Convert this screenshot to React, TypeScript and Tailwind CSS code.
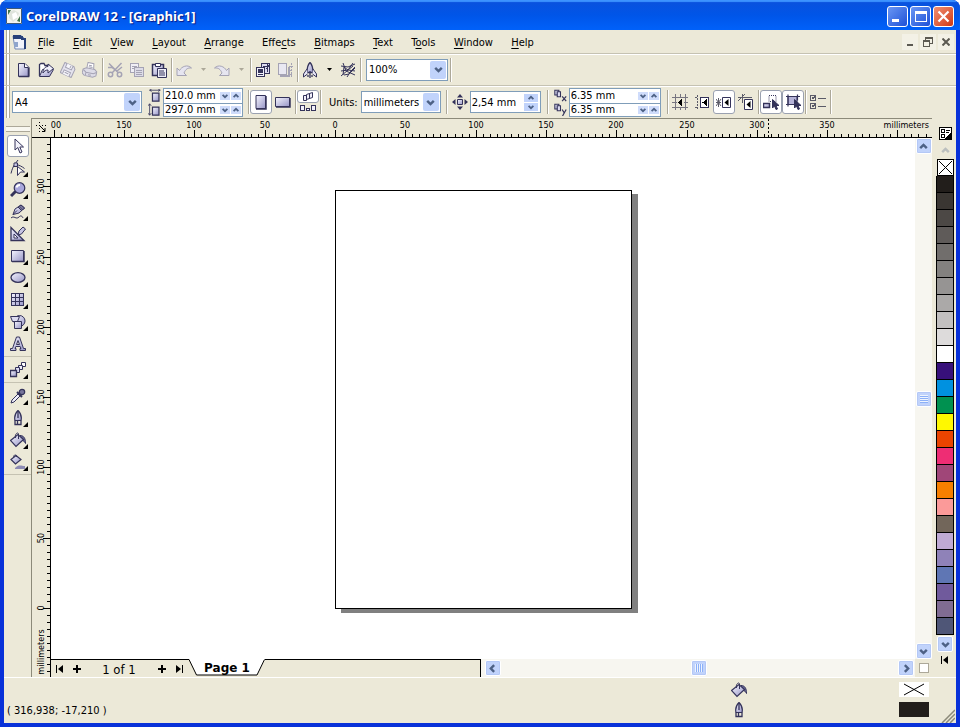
import React from "react";

type Kids = { children?: React.ReactNode };

const INK = "#34335a";
const SOFT = "url(#tint)";
const DIM = "#a5a3b4";
const GREY = "#5b5b68";

function Ico({ children, size = 16, crisp = false }: Kids & { size?: number; crisp?: boolean }) {
  return (
    <svg
      width={size}
      height={size}
      viewBox="0 0 16 16"
      fill="none"
      stroke={INK}
      strokeWidth="1"
      shapeRendering={crisp ? "crispEdges" : "auto"}
      className="shrink-0"
      aria-hidden="true"
    >
      {children}
    </svg>
  );
}

/* ---------- standard toolbar icons ---------- */
const NewIcon = () => (
  <Ico>
    <path d="M2.5 1.5h6.500l4 4v9H2.500z" fill={SOFT} />
    <path d="M8.500 1.500v4h4" fill="#fff" />
    <path d="M3 14.500h9.500V6" strokeWidth="1.600" />
  </Ico>
);
const OpenIcon = () => (
  <Ico>
    <path d="M1.500 14V2.500l1.500-1h3l1 2h4v2" fill="#fff" strokeWidth="1.300" />
    <path d="M1.500 14.500l3-7h11l-4 7z" fill={SOFT} />
    <path d="M5 11c0-4 2-6.500 5-6.500V2L15.500 6.500 10 11V8c-2 0-4 1-5 3z" fill="#f1f0fb" />
  </Ico>
);
const SaveIcon = () => (
  <Ico>
    <g stroke={DIM} transform="rotate(25 8 8)">
      <path d="M2 2.500h10l2 2v9H2z" fill="#e4e3ee" />
      <path d="M4.500 2.500v4h6.500v-4M4.500 13.500v-4h7v4M9 3v2.500M6 11.500h4" fill="#f6f6fb" />
    </g>
  </Ico>
);
const PrintIcon = () => (
  <Ico>
    <g stroke={DIM} transform="rotate(12 8 8)">
      <path d="M4.500 7l0-6h6l1 6" fill="#fff" />
      <path d="M1 8.500l3-2h8.500l2.500 2v4l-3 2H3.500l-2.500-2z" fill="#dddce8" />
      <path d="M1.500 9l3 2h7.500l3-2M4.500 11v3M6 3.500h3M6 5h4M7 13h3" />
    </g>
  </Ico>
);
const CutIcon = () => (
  <Ico>
    <g stroke={DIM} strokeWidth="1.500">
      <path d="M2 1.500l9.500 9.500M14.500 1L5 11M1 5.500h4l4 3M15 5l-5 4" />
      <circle cx="3.500" cy="12.500" r="2.200" />
      <circle cx="12.500" cy="12.500" r="2.200" />
    </g>
  </Ico>
);
const CopyIcon = () => (
  <Ico crisp>
    <g stroke={DIM}>
      <path d="M1.500 1.500h8v9h-8z" fill="#f0eff6" />
      <path d="M5.500 5.500h9v9h-9z" fill="#dddce8" />
      <path d="M3 4h5M3 6h2M7 8h6M7 10h6M7 12h6" />
    </g>
  </Ico>
);
const PasteIcon = () => (
  <Ico>
    <path d="M1.500 2.500h11v11h-11z" fill={SOFT} strokeWidth="1.500" />
    <path d="M4.500 1.500h5v3h-5z" fill="#fff" />
    <path d="M6.500 6.500h9v9h-9z" fill="#eeeefa" />
    <path d="M8 9h5M8 11h6M8 13h6" />
  </Ico>
);
const UndoIcon = ({ flip = false }: { flip?: boolean }) => (
  <Ico>
    <path
      d="M1 13.500V6l2.500 2.500c2-4 8-6.500 12-2.500-4-.5-6 1.500-7.500 5l2.500 2.500z"
      fill="#e6e5f0"
      stroke={DIM}
      transform={flip ? "matrix(-1 0 0 1 16 0)" : undefined}
    />
  </Ico>
);
const ImportIcon = () => (
  <Ico crisp>
    <path d="M6.500 1.500h8v10h-8z" fill="#dcdbf0" strokeWidth="1.500" />
    <path d="M8 4h4M12 2.500v3L14 4zM12.500 6v4" />
    <path d="M1.500 5.500h8v9h-8z" fill="#f1f0fb" strokeWidth="1.500" />
    <path d="M3.500 7v3h4V7zM3 12.500h5" fill={INK} />
  </Ico>
);
const ExportIcon = () => (
  <Ico crisp>
    <path d="M1.500 1.500h8v11h-8z" fill="#e9e8f2" stroke={DIM} />
    <path d="M3 14h9V5" stroke={DIM} strokeWidth="2" />
    <path d="M14.500 1v14M12 4h4M13 8h3M13 12h3" stroke={DIM} strokeDasharray="2 1" />
  </Ico>
);
const RocketIcon = () => (
  <Ico>
    <path d="M8 .5c2.500 2.500 3 6 3 10H5c0-4 .5-7.500 3-10z" fill={SOFT} strokeWidth="1.300" />
    <path d="M5 7l-3.500 5v3l4-3M11 7l3.500 5v3l-4-3" fill="#e6e5f6" />
    <path d="M6 13v2M8 9v7M10 13v2" strokeWidth="1.300" />
  </Ico>
);
const WebIcon = () => (
  <Ico>
    <path d="M1 4l7 1 7-3M3 1l3 8 9 4M1 9l7-1 7 1M1 14l7-6 5-7M7 15l4-6 4-4M4 5l4 3 5-4M4 13l5-1 6-6M4 5L3 13" />
  </Ico>
);

/* ---------- property bar icons ---------- */
const PaperIcon = ({ tall = false }: { tall?: boolean }) => (
  <Ico size={13}>
    <path d="M5.500 5h8v10h-8z" fill={SOFT} strokeWidth="1.500" />
    {tall ? (
      <path d="M2 1v14M0 3.500L2 1l2 2.500M0 12.500L2 15l2-2.500" />
    ) : (
      <path d="M2 1.500h13M4.500 0L2 1.500 4.500 3M12.500 0L15 1.500 12.500 3" />
    )}
  </Ico>
);
const Portrait = () => (
  <Ico>
    <path d="M3 1.500h9.500v13H3z" fill={SOFT} />
    <path d="M3 15h10V2" strokeWidth="1.500" />
  </Ico>
);
const Landscape = () => (
  <Ico>
    <path d="M.5 3.500h14v9H.5z" fill={SOFT} />
    <path d="M1 13h14V4" strokeWidth="1.500" />
  </Ico>
);
const PagesTop = () => (
  <svg width="12" height="9" viewBox="0 0 12 9" fill="#f1f0fb" stroke={INK} aria-hidden="true">
    <path d="M1.500 3.500h3v5h-3zM4.500 2.500l3-1v5l-3 1zM7.500 1.500l3-1v5l-3 1z" />
  </svg>
);
const PagesLow = () => (
  <svg width="16" height="7" viewBox="0 0 16 7" fill="#f1f0fb" stroke={INK} shapeRendering="crispEdges" aria-hidden="true">
    <path d="M.5.5h4v5h-4zM6.500 3.500h3v2h-3zM11.500.5h4v5h-4z" />
  </svg>
);
const NudgeIcon = () => (
  <Ico>
    <path d="M5.500 5.500h5v5h-5z" fill={SOFT} />
    <path d="M8 0l3 3.500H5zM8 16l3-3.500H5zM0 8l3.500-3v6zM16 8l-3.500-3v6z" fill={INK} stroke="none" />
  </Ico>
);
const DupIcon = ({ axis }: { axis: string }) => (
  <Ico size={13}>
    <path d="M1 1.500h5v6H1z" fill={SOFT} strokeWidth="1.300" />
    <path d="M4 3.500h4v6H4z" fill="#dcdbf0" strokeWidth="1.300" />
    <path d={axis === "x" ? "M10 9l5 6M15 9l-5 6" : "M10 8l2.500 4M15 8l-4.500 8"} strokeWidth="1.500" />
  </Ico>
);
const SnapGrid = () => (
  <Ico crisp>
    <path d="M3.500 0v16M8.500 0v4M8.500 13v3M13.500 0v16M0 3.500h16M0 8.500h5M12 8.500h4M0 13.500h16" stroke="#77757f" />
    <path d="M10 5v7L6 8.500z" fill="#000" stroke="none" />
  </Ico>
);
const SnapBox = () => (
  <>
    <path d="M6.500 3.500h8v10h-8z" fill="#fff" />
    <path d="M12.500 5v7L8.500 8.500z" fill="#000" stroke="none" />
  </>
);
const SnapGuides = () => (
  <Ico crisp>
    <path d="M3.500 1v15M1 3.500h3M1 13.500h3" strokeDasharray="2 1" stroke={GREY} />
    <SnapBox />
  </Ico>
);
const SnapObjects = () => (
  <Ico>
    <path d="M0 5l5 7M5 5l-5 7M2.500 4v9M0 8.500h5" stroke={GREY} />
    <SnapBox />
  </Ico>
);
const DynGuides = () => (
  <Ico>
    <path d="M4.500 0v9M0 3.500h14M0 7l7-7" stroke={GREY} />
    <path d="M6.500 5.500h8v10h-8z" fill="#fff" />
    <path d="M12.500 7v7L8.500 10.500z" fill="#000" stroke="none" />
  </Ico>
);
const CursorGlyph = () => <path d="M9.500 5.500v8.500l2-2 1.500 3.500 1.500-.5-1.500-3.500H16z" fill={INK} />;
const DrawComplex = () => (
  <Ico>
    <path d="M6 1.500h7v6H6z" strokeDasharray="1 1" />
    <path d="M.5 9.500h6v4h-6z" fill={SOFT} strokeWidth="1.500" />
    <CursorGlyph />
  </Ico>
);
const TreatFilled = () => (
  <Ico>
    <path d="M3 2.500h9v8H3z" fill="#b5b3d8" />
    <path d="M1 2.500h14M1 10.500h9M3 .5v12M12.500.5v6" strokeWidth="1.200" />
    <CursorGlyph />
  </Ico>
);
const OptionsIcon = () => (
  <Ico crisp>
    <path d="M.5 1.500h5v5h-5zM.5 9.500h5v5h-5zM8 4.500h8M8 12.500h8" stroke={GREY} />
    <path d="M2 3l1 2 3-4M2 11l1 2 3-4" stroke={GREY} />
  </Ico>
);

/* ---------- toolbox icons ---------- */
const PickTool = () => (
  <Ico>
    <path d="M5 1v11l2.800-2.500L10 15l2-1-2.200-5h3.700z" fill="#f2f2fb" />
  </Ico>
);
const ShapeTool = () => (
  <Ico>
    <path d="M8 0L5 4C3 6.500 2 9.500 1 13.500M6 4.500c3 .5 6 2 8.500 4" />
    <path d="M4 3h3.500v3.500H4z" fill={SOFT} />
    <path d="M7.500 6.500v9l3-3.500h4z" fill="#fff" />
  </Ico>
);
const ZoomTool = () => (
  <Ico>
    <path d="M5.500 9.500L1 14" strokeWidth="3" />
    <circle cx="9.500" cy="6" r="5.300" fill="#a9a7dc" strokeWidth="1.200" />
    <path d="M6.500 5.500c.5-2 2-2.500 3.500-2.500" stroke="#fff" strokeWidth="2" />
  </Ico>
);
const FreehandTool = () => (
  <Ico>
    <path d="M3 10.500L5 5l6-4 3.500 3-5.500 5z" fill={SOFT} />
    <path d="M3 10.500l4-4M8 3l4 4M1 14c3-3 5 2 8-1 2-2 3-1 4 1" />
    <path d="M9 2.500L12.500 6l2-2L11 1z" fill="#77759c" />
  </Ico>
);
const SmartTool = () => (
  <Ico>
    <path d="M1 1.500v13h13z" fill={SOFT} strokeWidth="1.300" />
    <path d="M4 8v4h4z" fill="#fff" />
    <path d="M8 9l1-4 4-4 2.500 2-4 5z" fill="#c6c4e2" />
  </Ico>
);
const RectTool = () => (
  <Ico>
    <path d="M1.500 2.500h12v11h-12z" fill={SOFT} />
    <path d="M2 13.500h12V3" strokeWidth="1.500" />
  </Ico>
);
const EllipseTool = () => (
  <Ico>
    <ellipse cx="8" cy="7.500" rx="7" ry="4.800" fill={SOFT} strokeWidth="1.300" />
  </Ico>
);
const GridTool = () => (
  <Ico crisp>
    <path d="M1.500 1.500h12v12h-12z" fill={SOFT} />
    <path d="M5.500 1v13M9.500 1v13M1 5.500h13M1 9.500h13" />
  </Ico>
);
const BasicShapes = () => (
  <Ico>
    <circle cx="9.500" cy="7" r="5.500" fill={SOFT} />
    <path d="M.5 2.500h9l-2 5h-5z" fill="#dcdbf0" />
    <path d="M4.500 7.500h7v7h-7z" fill={SOFT} />
  </Ico>
);
const TextTool = () => (
  <Ico>
    <path
      d="M6.500 1h3l4 11.500h2v2h-5.500v-2h1l-.8-2H5.800l-.8 2h1v2H.5v-2h2zM8 4.500L6.500 8.500h3z"
      fill={SOFT}
      fillRule="evenodd"
    />
  </Ico>
);
const BlendTool = () => (
  <Ico>
    <path d="M11.500.5h4v4h-4z" fill="#fff" />
    <path d="M8.500 3.500h4v4h-4z" fill="#eeeefa" />
    <path d="M5.500 5.500h4v5h-4z" fill="#dcdbf0" />
    <path d="M.5 8.500h6v6h-6z" fill={SOFT} strokeWidth="1.300" />
  </Ico>
);
const Eyedropper = () => (
  <Ico>
    <path d="M1 15l1-3 6-6 2 2-6 6z" fill="#eeeefa" />
    <path d="M7 4l5 5" strokeWidth="2" />
    <circle cx="12" cy="4" r="2.700" fill="#77759c" strokeWidth="1.200" />
  </Ico>
);
const PenTool = () => (
  <Ico>
    <path d="M8 .5c-3 3-4 6-3 10h6c1-4 0-7-3-10z" fill={SOFT} strokeWidth="1.200" />
    <path d="M8 1v7M5 10.500v4h6v-4M7.500 11v4" strokeWidth="1.300" />
  </Ico>
);
const FillTool = () => (
  <Ico>
    <path d="M10 3.500c4 0 5.500 3 5.500 8-1-2-2-3-4-3.500" fill="#6c6a98" />
    <path d="M.5 8.500L8 2.500l5.500 5L6 14.500z" fill={SOFT} strokeWidth="1.200" />
    <path d="M5.500 6c-1-4 2.500-6.500 3-4v5" />
  </Ico>
);
const InteractiveFill = () => (
  <Ico>
    <path d="M1 5.500L6 1.500l5 4L5.500 10z" fill={SOFT} strokeWidth="1.200" />
    <path d="M3.500 4c0-4 3-4 3-1" />
    <path d="M5 14c4-4 6-2 10-2v3H5z" fill="#8d8bb4" stroke="none" />
  </Ico>
);

/* ---------- shared pieces ---------- */
const Sep = () => <span className="mx-px h-6 w-px shrink-0 bg-[#aca899] shadow-[1px_0_0_#fff]" />;
const Grip = () => (
  <span className="mx-[2px] w-[4px] shrink-0 self-stretch border-x border-[#aca899] bg-white" />
);

function Chevron({ dir = "down", small = false }: { dir?: "down" | "up" | "left" | "right"; small?: boolean }) {
  const d = {
    down: "M2 3.500l3 3 3-3",
    up: "M2 6.500l3-3 3 3",
    left: "M6.500 2l-3 3 3 3",
    right: "M3.500 2l3 3-3 3",
  }[dir];
  return (
    <svg width={small ? 8 : 11} height={small ? 8 : 11} viewBox="0 0 10 10" fill="none" stroke="#4d6185" strokeWidth="2.200" aria-hidden="true">
      <path d={d} />
    </svg>
  );
}

function Combo({ id, label, value, options, className }: { id: string; label?: string; value: string; options: string[]; className: string }) {
  return (
    <span className={`flex shrink-0 items-center border border-[#7f9db9] bg-white p-px ${className}`}>
      <select id={id} aria-label={label} defaultValue={value} className="h-full min-w-0 flex-1 appearance-none bg-white pl-px outline-none">
        {options.map((o) => (
          <option key={o}>{o}</option>
        ))}
      </select>
      <span className="flex h-full w-4 items-center justify-center rounded-xs bg-[#c1d3fb]">
        <Chevron />
      </span>
    </span>
  );
}

function TinySpin({ name }: { name: string }) {
  return (
    <span className="flex gap-px pr-px">
      <button aria-label={`${name} down`} className="flex h-2 w-[10px] items-center justify-center bg-[#cfdcfb]">
        <Chevron small />
      </button>
      <button aria-label={`${name} up`} className="flex h-2 w-[10px] items-center justify-center bg-[#cfdcfb]">
        <Chevron dir="up" small />
      </button>
    </span>
  );
}

function PairFields({ rows, className }: { rows: { name: string; value: string }[]; className: string }) {
  return (
    <span className={`flex shrink-0 flex-col border border-[#7f9db9] bg-white ${className}`}>
      {rows.map((r, i) => (
        <span key={r.name} className={`flex items-center ${i ? "h-[13px] border-t border-[#7f9db9]" : "h-[14px] pt-px"}`}>
          <input aria-label={r.name} defaultValue={r.value} className="h-3 min-w-0 flex-1 bg-transparent pl-px leading-3 outline-none" />
          <TinySpin name={r.name} />
        </span>
      ))}
    </span>
  );
}

function Tool({ name, children, on = false }: Kids & { name: string; on?: boolean }) {
  return (
    <button
      aria-label={name}
      title={name}
      aria-pressed={on}
      className={`flex h-6 w-[22px] shrink-0 items-center justify-center ${on ? "rounded-[3px] border border-[#9aa1b0] bg-white" : ""}`}
    >
      {children}
    </button>
  );
}

const Caret = ({ dim = false, name }: { dim?: boolean; name: string }) => (
  <button aria-label={name} className="flex h-6 w-4 shrink-0 items-center justify-center">
    <svg width="5" height="3" viewBox="0 0 5 3" aria-hidden="true">
      <path d="M0 0h5L2.500 3z" fill={dim ? "#aca899" : "#000"} />
    </svg>
  </button>
);

const menus: [string, string, string][] = [
  ["", "F", "ile"],
  ["", "E", "dit"],
  ["", "V", "iew"],
  ["", "L", "ayout"],
  ["", "A", "rrange"],
  ["Effe", "c", "ts"],
  ["", "B", "itmaps"],
  ["", "T", "ext"],
  ["T", "o", "ols"],
  ["", "W", "indow"],
  ["", "H", "elp"],
];

const tools: { name: string; icon: React.ReactNode; fly?: boolean; gap?: boolean; on?: boolean }[] = [
  { name: "Pick", icon: <PickTool />, on: true },
  { name: "Shape", icon: <ShapeTool />, fly: true },
  { name: "Zoom", icon: <ZoomTool />, fly: true },
  { name: "Freehand", icon: <FreehandTool />, fly: true },
  { name: "Smart drawing", icon: <SmartTool /> },
  { name: "Rectangle", icon: <RectTool />, fly: true },
  { name: "Ellipse", icon: <EllipseTool />, fly: true },
  { name: "Graph paper", icon: <GridTool />, fly: true },
  { name: "Basic shapes", icon: <BasicShapes />, fly: true },
  { name: "Text", icon: <TextTool /> },
  { name: "Interactive blend", icon: <BlendTool />, fly: true, gap: true },
  { name: "Eyedropper", icon: <Eyedropper />, fly: true, gap: true },
  { name: "Outline", icon: <PenTool />, fly: true },
  { name: "Fill", icon: <FillTool />, fly: true },
  { name: "Interactive fill", icon: <InteractiveFill />, fly: true },
];

const swatches = [
  "#221e1b", "#3a3632", "#4c4845", "#5f5b59", "#716e6c", "#83817f", "#969493", "#aba9a8", "#c2c0c0", "#dddbdb", "#ffffff",
  "#37107a", "#0091e0", "#009150", "#fff800", "#ea4400", "#ee2d74", "#a04678", "#f77f00", "#fb9a99", "#72665a",
  "#bfaad4", "#8f82b8", "#5f76b4", "#705a9c", "#806c92", "#4f5677",
];

const MM = 1.406;
const steps = Array.from({ length: 150 }, (_, i) => i - 40);

function TopRuler() {
  const zero = 284;
  return (
    <svg className="h-[18px] min-w-0 flex-1 bg-[#ece9d8] font-['DejaVu_Sans_Condensed','Noto_Sans',sans-serif] text-[9px]" aria-label="Horizontal ruler">
      {steps.map((s) => {
        const x = Math.round(zero + s * 5 * MM);
        const major = s % 10 === 0;
        const label = s === -40 ? "00" : String(Math.abs(s * 5));
        return (
          <g key={s}>
            <rect x={x} y={major ? 11 : 15} width="1" height={major ? 7 : 3} />
            {major && s <= 70 && (
              <text x={s === -40 ? x + 2 : x} y="9" textAnchor="middle">
                {label}
              </text>
            )}
          </g>
        );
      })}
      <path d="M717.500 0v18" stroke="#000" strokeDasharray="2 2" />
      <text x="100%" dx="-3" y="9" textAnchor="end">
        millimeters
      </text>
    </svg>
  );
}

function SideRuler() {
  const zero = 470;
  return (
    <svg className="h-full w-[18px] shrink-0 bg-[#ece9d8] font-['DejaVu_Sans_Condensed','Noto_Sans',sans-serif] text-[9px]" aria-label="Vertical ruler">
      {steps.map((s) => {
        const y = Math.round(zero - s * 5 * MM);
        const major = s % 10 === 0;
        return (
          <g key={s}>
            <rect x={major ? 11 : 15} y={y} width={major ? 7 : 3} height="1" />
            {major && s >= 0 && s <= 60 && (
              <text transform={`translate(12 ${y}) rotate(-90)`} textAnchor="middle">
                {s * 5}
              </text>
            )}
          </g>
        );
      })}
      <text transform={`translate(12 ${zero + 44}) rotate(-90)`} textAnchor="middle">
        millimeters
      </text>
    </svg>
  );
}

const scrollBtn =
  "flex size-4 shrink-0 items-center justify-center rounded-[2px] border border-white bg-[#c1d3fb] shadow-[0_0_0_1px_#b4c8f6_inset]";

function Nav({ name, d }: { name: string; d: string }) {
  return (
    <button aria-label={name} className="flex h-4 w-[17px] shrink-0 items-center justify-center">
      <svg width="10" height="10" viewBox="0 0 10 10" aria-hidden="true">
        <path d={d} />
      </svg>
    </button>
  );
}

const FIRST = "M1 1h1v8H1zM8 1v8L3 5z";
const LAST = "M8 1h1v8H8zM2 1v8l5-4z";
const PLUS = "M4 1h2v3h3v2H6v3H4V6H1V4h3z";

const winBtn = "flex size-[21px] items-center justify-center rounded-[3px] border border-white";

export default function App() {
  return (
    <div className="flex h-screen w-full flex-col overflow-hidden rounded-t-lg bg-[#0831d9] font-['DejaVu_Sans_Condensed','Noto_Sans',sans-serif] text-[11px] leading-none text-black">
      <header className="flex h-[30px] shrink-0 items-center bg-linear-to-b from-[#0a51dc] via-[#0055e8] to-[#0061fa] px-[6px] pt-[2px] shadow-[inset_0_2px_1px_#3c93ff]">
        <svg width="16" height="16" viewBox="0 0 16 16" aria-hidden="true">
          <defs>
            <linearGradient id="tint" x1="0" y1="0" x2="1" y2="1">
              <stop offset="0" stopColor="#f6f6ff" />
              <stop offset="1" stopColor="#9694c6" />
            </linearGradient>
          </defs>
          <path d="M0 0h16v16H0z" fill="#f4f5f0" />
          <path d="M.5.5h15v15H.5z" fill="none" stroke="#405a78" />
          <path d="M3 4l5-2 5 3-2 6-4 3-4-4z" fill="#dfe4dc" />
          <path d="M6 6l4-2 2 5-5 3z" fill="#fff" />
          <path d="M2 2h3L2 7zM11 13l3-5v6z" fill="#43764a" />
        </svg>
        <h1 className="ml-[4px] flex-1 font-['Open_Sans','Noto_Sans',sans-serif] text-[13px] font-bold text-white [text-shadow:1px_1px_1px_#0a1883]">
          CorelDRAW 12 - [Graphic1]
        </h1>
        <div className="flex gap-[2px]">
          <button aria-label="Minimize" className={`${winBtn} bg-linear-to-br from-[#6a96f4] to-[#1f4fd6]`}>
            <span className="mr-1 mt-2 h-[3px] w-[7px] bg-white" />
          </button>
          <button aria-label="Maximize" className={`${winBtn} bg-linear-to-br from-[#6a96f4] to-[#1f4fd6]`}>
            <span className="h-[11px] w-3 border border-t-[3px] border-white" />
          </button>
          <button aria-label="Close" className={`${winBtn} bg-linear-to-br from-[#f08e70] to-[#cf3509]`}>
            <svg width="13" height="13" viewBox="0 0 13 13" stroke="#fff" strokeWidth="2.200" aria-hidden="true">
              <path d="M1.500 1.500l10 10M11.500 1.500l-10 10" />
            </svg>
          </button>
        </div>
      </header>

      <div className="mx-1 mb-1 flex min-h-0 flex-1 flex-col bg-[#ece9d8]">
        <nav aria-label="Main menu" className="flex h-[24px] shrink-0 items-center border-b border-[#c5c2b2] pr-[2px] shadow-[0_1px_0_#fff]">
          <Grip />
          <svg width="14" height="16" viewBox="0 0 14 16" className="mr-[3px]" aria-hidden="true">
            <path d="M1 2h9l3 3v10H3z" fill="#f2f4fb" stroke="#7388b4" />
            <path d="M1 1h8v4H1z" fill="#27407a" />
            <path d="M2 8h4v5H2z" fill="#8fa5cc" />
            <path d="M10 2v3h3v10" fill="none" stroke="#27407a" strokeWidth="2" />
          </svg>
          <ul className="flex w-[514px] justify-between pt-[2px]">
            {menus.map(([a, u, b]) => (
              <li key={a + u + b}>
                <button className="h-5 px-[9px]">
                  {a}
                  <span className="underline underline-offset-2">{u}</span>
                  {b}
                </button>
              </li>
            ))}
          </ul>
          <div className="ml-auto flex gap-[2px]">
            <button aria-label="Minimize document" className="flex size-4 items-end justify-center bg-[#f3f1e6] pb-1">
              <span className="h-[2px] w-[6px] bg-[#5c5a52]" />
            </button>
            <button aria-label="Restore document" className="flex size-4 items-center justify-center bg-[#f3f1e6]">
              <svg width="10" height="10" viewBox="0 0 10 10" fill="none" stroke="#5c5a52" shapeRendering="crispEdges" aria-hidden="true">
                <path d="M2.500 3V.5h7v6H7M3 1.500h6M.5 3.500h6v6h-6zM1 4.500h5" />
              </svg>
            </button>
            <button aria-label="Close document" className="flex size-4 items-center justify-center bg-[#f3f1e6]">
              <svg width="8" height="8" viewBox="0 0 8 8" stroke="#5c5a52" strokeWidth="2" aria-hidden="true">
                <path d="M.5.5l7 7M7.500.5l-7 7" />
              </svg>
            </button>
          </div>
        </nav>

        <div role="toolbar" aria-label="Standard" className="flex h-8 shrink-0 items-center border-b border-[#c5c2b2] shadow-[0_1px_0_#fff]">
          <Grip />
          <span className="w-px" />
          <Tool name="New"><NewIcon /></Tool>
          <Tool name="Open"><OpenIcon /></Tool>
          <Tool name="Save"><SaveIcon /></Tool>
          <Tool name="Print"><PrintIcon /></Tool>
          <Sep />
          <Tool name="Cut"><CutIcon /></Tool>
          <Tool name="Copy"><CopyIcon /></Tool>
          <Tool name="Paste"><PasteIcon /></Tool>
          <Sep />
          <Tool name="Undo"><UndoIcon /></Tool>
          <Caret name="Undo list" dim />
          <Tool name="Redo"><UndoIcon flip /></Tool>
          <Caret name="Redo list" dim />
          <Sep />
          <Tool name="Import"><ImportIcon /></Tool>
          <Tool name="Export"><ExportIcon /></Tool>
          <Sep />
          <Tool name="Application launcher"><RocketIcon /></Tool>
          <Caret name="Application list" />
          <Tool name="Corel web"><WebIcon /></Tool>
          <Sep />
          <Combo id="zoom" label="Zoom level" value="100%" options={["50%", "100%", "200%"]} className="ml-1 mr-px h-[22px] w-[82px]" />
          <Sep />
        </div>

        <div role="toolbar" aria-label="Property bar" className="flex h-8 shrink-0 items-center">
          <Grip />
          <Combo id="paper" label="Paper type" value="A4" options={["A3", "A4", "A5", "Letter"]} className="h-[22px] w-[130px]" />
          <span className="mx-[2px] ml-[6px] flex flex-col gap-px">
            <PaperIcon />
            <PaperIcon tall />
          </span>
          <PairFields className="mr-1 w-20" rows={[{ name: "Paper width", value: "210.0 mm" }, { name: "Paper height", value: "297.0 mm" }]} />
          <Sep />
          <Tool name="Portrait" on><Portrait /></Tool>
          <Tool name="Landscape"><Landscape /></Tool>
          <Sep />
          <span className="flex w-[22px] flex-col items-center">
            <button aria-label="Same size for all pages" className="flex h-[13px] w-[22px] items-center justify-center rounded-[3px] border border-[#9aa1b0] bg-white">
              <PagesTop />
            </button>
            <button aria-label="Different page sizes" className="flex h-[11px] w-[22px] items-center justify-center">
              <PagesLow />
            </button>
          </span>
          <Sep />
          <label htmlFor="units" className="ml-[7px] mr-[3px]">Units:</label>
          <Combo id="units" value="millimeters" options={["millimeters", "inches"]} className="mr-1 h-[22px] w-20" />
          <Sep />
          <span className="ml-1 mr-[2px] flex"><NudgeIcon /></span>
          <span className="mr-[5px] flex h-[22px] w-[71px] shrink-0 items-center border border-[#7f9db9] bg-white">
            <input aria-label="Nudge offset" defaultValue="2,54 mm" className="h-4 min-w-0 flex-1 bg-transparent pl-px outline-none" />
            <span className="flex flex-col gap-px px-[2px]">
              <button aria-label="Nudge up" className="flex h-2 w-[14px] items-center justify-center bg-[#c1d3fb]"><Chevron dir="up" small /></button>
              <button aria-label="Nudge down" className="flex h-2 w-[14px] items-center justify-center bg-[#c1d3fb]"><Chevron small /></button>
            </span>
          </span>
          <Sep />
          <span className="ml-[5px] mr-[2px] flex flex-col gap-px">
            <DupIcon axis="x" />
            <DupIcon axis="y" />
          </span>
          <PairFields className="mr-[5px] w-[92px]" rows={[{ name: "Duplicate x", value: "6.35 mm" }, { name: "Duplicate y", value: "6.35 mm" }]} />
          <Sep />
          <Tool name="Snap to grid"><SnapGrid /></Tool>
          <Tool name="Snap to guidelines"><SnapGuides /></Tool>
          <Tool name="Snap to objects" on><SnapObjects /></Tool>
          <Tool name="Dynamic guides"><DynGuides /></Tool>
          <Sep />
          <Tool name="Draw complex objects" on><DrawComplex /></Tool>
          <Tool name="Treat as filled" on><TreatFilled /></Tool>
          <Sep />
          <Tool name="Options"><OptionsIcon /></Tool>
          <Sep />
        </div>

        <div className="flex min-h-0 flex-1">
          <aside aria-label="Toolbox" className="flex w-7 shrink-0 flex-col items-center border-r border-[#8c8a7a] pt-2">
            <span className="mb-[3px] h-[6px] w-6 shrink-0 border-y border-[#aca899] bg-[#f8f7f0]" />
            {tools.map((t) => (
              <div key={t.name} className={`flex w-full flex-col items-center ${t.gap ? "mt-px border-t border-[#c5c2b2] pt-[2px]" : ""}`}>
                <button
                  aria-label={t.name}
                  className={`flex h-[22px] w-[22px] items-center justify-center ${t.on ? "rounded-[3px] border border-[#9aa1b0] bg-white" : ""}`}
                >
                  <span className="relative flex">
                    {t.icon}
                    {t.fly && (
                      <svg width="5" height="5" viewBox="0 0 5 5" className="absolute -bottom-px -right-[2px]" aria-hidden="true">
                        <path d="M5 0v5H0z" />
                      </svg>
                    )}
                  </span>
                </button>
              </div>
            ))}
            <span className="mt-px h-px w-full bg-[#c5c2b2]" />
          </aside>

          <main className="flex min-w-0 flex-1 flex-col border-t border-[#8c8a7a]">
            <div className="flex shrink-0 border-b border-black">
              <button aria-label="Ruler origin" className="flex w-[19px] items-center justify-center">
                <svg width="12" height="12" viewBox="0 0 12 12" fill="none" stroke="#000" aria-hidden="true">
                  <path d="M3.500 0v12M0 3.500h12" strokeDasharray="1 2" />
                  <path d="M4 4l5 5M9 6v3.500H6" />
                </svg>
              </button>
              <TopRuler />
            </div>
            <div className="flex min-h-0 flex-1">
              <SideRuler />
              <div className="flex min-w-0 flex-1 flex-col border-l border-black">
                <div className="flex min-h-0 flex-1">
                  <div className="relative min-w-0 flex-1 overflow-hidden bg-white">
                    <div className="absolute left-[284px] top-[52px] h-[419px] w-[297px] border border-black bg-white shadow-[6px_4px_0_#808080]" />
                  </div>
                  <div className="flex w-[17px] flex-col items-center justify-between bg-[#f7f6f0]">
                    <button aria-label="Scroll up" className={scrollBtn}><Chevron dir="up" /></button>
                    <button aria-label="Vertical position" className={scrollBtn}>
                      <span className="h-2 w-2 bg-[repeating-linear-gradient(#eef4fe_0_1px,#8cb0f8_1px_2px)]" />
                    </button>
                    <button aria-label="Scroll down" className={scrollBtn}><Chevron /></button>
                  </div>
                </div>
                <div className="flex h-[18px] shrink-0">
                  <div className="flex min-w-0 flex-1 items-stretch">
                    <div className="flex items-center border-t border-black pr-[2px]">
                      <Nav name="First page" d={FIRST} />
                      <Nav name="Add page before" d={PLUS} />
                      <span className="w-[68px] pt-[2px] text-center text-[13px]">1 of 1</span>
                      <Nav name="Add page after" d={PLUS} />
                      <Nav name="Last page" d={LAST} />
                    </div>
                    <button className="grid w-[76px] shrink-0 text-[12px] font-bold">
                      <svg width="76" height="18" viewBox="0 0 76 18" className="col-start-1 row-start-1" aria-hidden="true">
                        <path d="M0 0h76L68 16H8z" fill="#fff" />
                        <path d="M0 .5l7.500 15.500h60.500L75.500.5" fill="none" stroke="#000" />
                      </svg>
                      <span className="col-start-1 row-start-1 self-center font-['DejaVu_Sans',sans-serif]">Page 1</span>
                    </button>
                    <div className="flex-1 border-r border-t border-black" />
                  </div>
                  <div className="flex min-w-0 flex-1 items-center justify-between bg-[#f7f6f0] pl-1 pr-px">
                    <button aria-label="Scroll left" className={scrollBtn}><Chevron dir="left" /></button>
                    <button aria-label="Horizontal position" className={scrollBtn}>
                      <span className="h-2 w-2 bg-[repeating-linear-gradient(90deg,#eef4fe_0_1px,#8cb0f8_1px_2px)]" />
                    </button>
                    <button aria-label="Scroll right" className={scrollBtn}><Chevron dir="right" /></button>
                  </div>
                  <button aria-label="Navigator" className="flex w-[17px] items-center justify-center">
                    <span className="size-[10px] border border-[#aca899] bg-white" />
                  </button>
                </div>
              </div>
            </div>
          </main>

          <aside aria-label="Colour palette" className="flex w-6 shrink-0 flex-col items-center pl-[2px] pt-2">
            <button aria-label="Palette menu" className="flex h-[15px] items-center">
              <svg width="13" height="13" viewBox="0 0 13 13" fill="none" stroke="#000" shapeRendering="crispEdges" aria-hidden="true">
                <path d="M.5.5h12v12H.5z" fill="#fff" />
                <path d="M2.500 2.500h3v3h-3zM2.500 7.500h3v3h-3zM7 3.500h4M7 5.500h3" />
                <path d="M11 7v4H7z" fill="#000" />
              </svg>
            </button>
            <button aria-label="Palette up" className="flex h-[18px] items-center opacity-30"><Chevron dir="up" /></button>
            <button aria-label="No colour" className="size-[17px] shrink-0 border border-black bg-white">
              <svg width="15" height="15" viewBox="0 0 15 15" stroke="#000" aria-hidden="true">
                <path d="M1 1l13 13M14 1L1 14" />
              </svg>
            </button>
            {swatches.map((c) => (
              <button key={c} aria-label={`Colour ${c}`} className="h-[17px] w-[18px] shrink-0 border-x border-b border-black" style={{ background: c }} />
            ))}
            <button aria-label="Palette down" className={`${scrollBtn} mt-px`}><Chevron /></button>
            <Nav name="Expand palette" d={FIRST} />
          </aside>
        </div>

        <footer className="flex h-[46px] shrink-0 border-t border-white">
          <output className="flex-1 self-end pb-[7px] pl-[3px]">( 316,938; -17,210 )</output>
          <div className="flex w-[168px] flex-col items-start gap-1 pt-1">
            <FillTool />
            <PenTool />
          </div>
          <div className="flex flex-col gap-[5px] pr-3 pt-[4px]">
            <svg width="30" height="15" viewBox="0 0 30 15" stroke="#000" aria-label="No fill">
              <path d="M0 0h30v15H0z" fill="#fff" stroke="none" />
              <path d="M5 2l20 11M25 2L5 13" />
            </svg>
            <span className="h-[15px] w-[30px] bg-[#221e1b]" />
          </div>
          <svg width="14" height="14" viewBox="0 0 14 14" className="mr-px self-end" stroke="#8c8a7a" strokeWidth="1.500" aria-hidden="true">
            <path d="M1 14L14 1M5 14l9-9M9 14l5-5" />
          </svg>
        </footer>
      </div>
    </div>
  );
}
